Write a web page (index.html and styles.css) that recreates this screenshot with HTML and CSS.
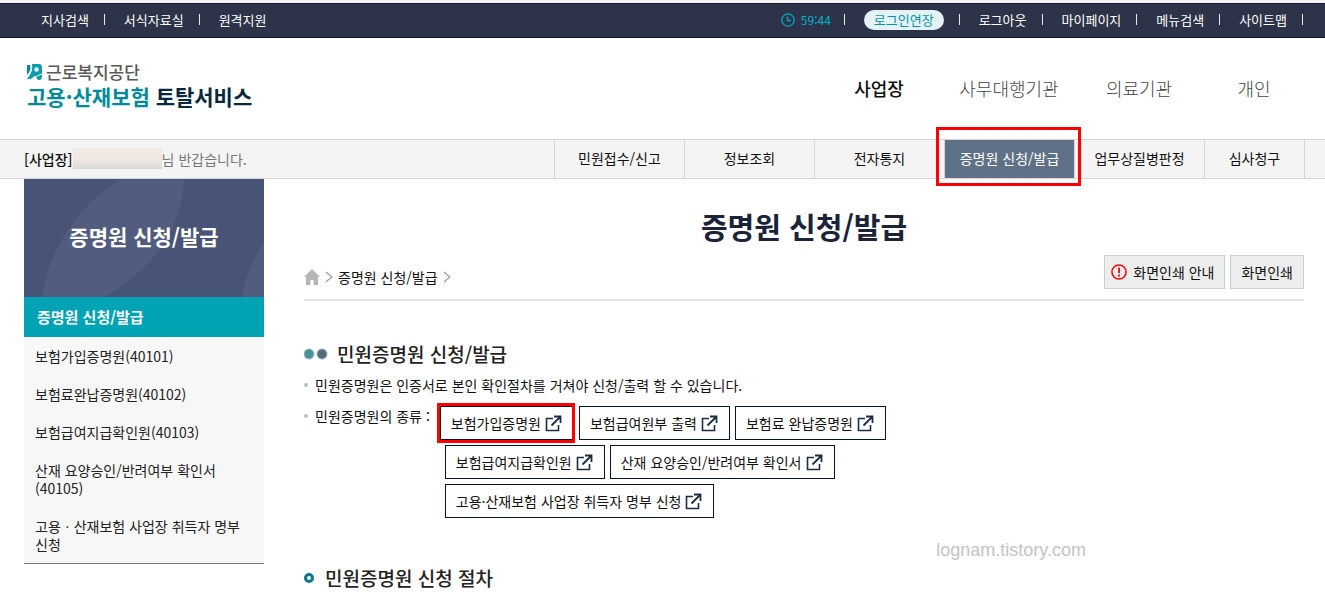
FILE: index.html
```html
<!DOCTYPE html>
<html lang="ko">
<head>
  <meta charset="UTF-8">
  <meta name="viewport" content="width=device-width, initial-scale=1.0">
  <title>고용·산재보험 토탈서비스</title>
  <link rel="stylesheet" href="styles.css">
</head>
<body>
  <svg class="sprite" aria-hidden="true">
    <symbol id="icoLink" viewBox="0 0 17 17">
      <path d="M8 3.500H1.500v12h12V10" fill="none" stroke="#1c2c42" stroke-width="1.6"/>
      <path d="M9 1.500H15.500V8M15.500 1.500L6.500 10.500" fill="none" stroke="#1c2c42" stroke-width="1.8"/>
    </symbol>
    <symbol id="icoArrow" viewBox="0 0 8 12">
      <path d="M1 1l6 5-6 5" fill="none" stroke="#999" stroke-width="1.1"/>
    </symbol>
  </svg>

  <div class="topBar">
    <ul class="utilList">
      <li><a href="#">지사검색</a></li>
      <li><a href="#">서식자료실</a></li>
      <li><a href="#">원격지원</a></li>
    </ul>
    <ul class="utilList utilRight">
      <li class="timer">
        <svg width="14" height="14" viewBox="0 0 14 14"><circle cx="7" cy="7" r="6.2" fill="none" stroke="#00a9bd" stroke-width="1.3"/><path d="M6.500 3.500V7.500H10" fill="none" stroke="#00a9bd" stroke-width="1.3"/></svg>
        <span>59:44</span>
      </li>
      <li><button type="button" class="extendBtn">로그인연장</button></li>
      <li><a href="#">로그아웃</a></li>
      <li><a href="#">마이페이지</a></li>
      <li><a href="#">메뉴검색</a></li>
      <li><a href="#">사이트맵</a></li>
    </ul>
  </div>

  <header class="header">
    <a href="#" class="logo">
      <span class="logoTop">
        <svg width="15" height="16" viewBox="0 0 15 16">
          <path d="M0 1h3c1 3 .5 6-3 10z" fill="#00899d"/>
          <path d="M5 0h7q3 0 3 3v9q0 4-3 4h-1L8 12l-4 3H0C3 11 6 6 5 0z" fill="#0a9db0"/>
          <circle cx="9.500" cy="5.500" r="2.200" fill="#fff"/>
          <path d="M4 0c1.500 6-.5 10-4 13M2 16c4-1 7-4 13-6M7 12l3 4" fill="none" stroke="#fff" stroke-width="1.100"/>
        </svg>
        근로복지공단
      </span>
      <span class="logoMain"><em>고용·산재보험</em> 토탈서비스</span>
    </a>
    <nav class="mainNav">
      <a href="#" class="on">사업장</a>
      <a href="#">사무대행기관</a>
      <a href="#">의료기관</a>
      <a href="#" class="short">개인</a>
    </nav>
  </header>

  <div class="subBar">
    <p class="welcome"><strong>[사업장]</strong><span class="userName"></span>님 반갑습니다.</p>
    <nav class="subNav">
      <a href="#">민원접수/신고</a>
      <a href="#">정보조회</a>
      <a href="#">전자통지</a>
      <a href="#" class="on">증명원 신청/발급</a>
      <a href="#">업무상질병판정</a>
      <a href="#" class="short">심사청구</a>
    </nav>
  </div>

  <div class="wrap">
    <aside class="side">
      <div class="sideHead">
        <svg class="sideBg" viewBox="0 0 240 118" preserveAspectRatio="none" aria-hidden="true">
          <path d="M96 0h64c-1 48-32 92-80 118H18C25 72 52 28 96 0zM240 64v54h-22c3-20 12-40 22-54z" fill="#525c7e"/>
        </svg>
        <h2>증명원 신청/발급</h2>
      </div>
      <a href="#" class="sideCurrent">증명원 신청/발급</a>
      <ul class="sideList">
        <li><a href="#">보험가입증명원(40101)</a></li>
        <li><a href="#">보험료완납증명원(40102)</a></li>
        <li><a href="#">보험급여지급확인원(40103)</a></li>
        <li><a href="#">산재 요양승인/반려여부 확인서(40105)</a></li>
        <li><a href="#">고용ㆍ산재보험 사업장 취득자 명부 신청</a></li>
      </ul>
    </aside>

    <main class="content">
      <h1>증명원 신청/발급</h1>
      <div class="pathBar">
        <nav class="crumbs">
          <a href="#" aria-label="홈"><svg width="16" height="16" viewBox="0 0 16 16"><path d="M8 0l8 8h-2v8H9.500v-5h-3v5H2V8H0z" fill="#b5b5b5"/></svg></a>
          <svg width="8" height="12"><use href="#icoArrow"/></svg>
          <a href="#">증명원 신청/발급</a>
          <svg width="8" height="12"><use href="#icoArrow"/></svg>
        </nav>
        <div class="printBtns">
          <button type="button" class="guideBtn">
            <svg width="16" height="16" viewBox="0 0 16 16"><circle cx="8" cy="8" r="7.100" fill="none" stroke="#f00" stroke-width="1.500"/><path d="M8 3.500v5.500M8 10.500v2" stroke="#f00" stroke-width="1.800"/></svg>
            화면인쇄 안내
          </button>
          <button type="button">화면인쇄</button>
        </div>
      </div>

      <h3 class="titleDots">민원증명원 신청/발급</h3>
      <ul class="dotList">
        <li>민원증명원은 인증서로 본인 확인절차를 거쳐야 신청/출력 할 수 있습니다.</li>
        <li class="kinds">
          <span>민원증명원의 종류 :</span>
          <div class="linkRows">
            <div class="linkRow first">
              <a href="#" class="linkBtn marked">보험가입증명원<svg width="17" height="17"><use href="#icoLink"/></svg></a>
              <a href="#" class="linkBtn">보험급여원부 출력<svg width="17" height="17"><use href="#icoLink"/></svg></a>
              <a href="#" class="linkBtn">보험료 완납증명원<svg width="17" height="17"><use href="#icoLink"/></svg></a>
            </div>
            <div class="linkRow">
              <a href="#" class="linkBtn">보험급여지급확인원<svg width="17" height="17"><use href="#icoLink"/></svg></a>
              <a href="#" class="linkBtn">산재 요양승인/반려여부 확인서<svg width="17" height="17"><use href="#icoLink"/></svg></a>
            </div>
            <div class="linkRow">
              <a href="#" class="linkBtn">고용·산재보험 사업장 취득자 명부 신청<svg width="17" height="17"><use href="#icoLink"/></svg></a>
            </div>
          </div>
        </li>
      </ul>
      <h3 class="titleRing">민원증명원 신청 절차</h3>
      <span class="watermark">lognam.tistory.com</span>
    </main>
  </div>
</body>
</html>
```
FILE: styles.css
```css
*, *::before, *::after { box-sizing: border-box; }
body { margin: 0; border-top: 3px solid #f3f3f3; background: #fff; color: #222; font-family: "Noto Sans CJK KR", sans-serif; font-size: 14px; line-height: 20px; }
a { color: inherit; text-decoration: none; }
ul { margin: 0; padding: 0; list-style: none; }
h1, h2, h3, p { margin: 0; }
button { font-family: inherit; font-size: 14px; cursor: pointer; }
svg { flex: none; display: block; }
.sprite { position: absolute; width: 0; height: 0; }

/* top bar */
.topBar { display: flex; justify-content: space-between; align-items: center; height: 35px; padding: 0 22px 2px 41px; background: #2d3348; border-top: 1px solid #151b33; border-bottom: 1px solid #151b33; color: #fff; font-size: 13px; }
.utilList { display: flex; gap: 19px; }
.utilList li { display: flex; align-items: center; gap: 15px; }
.utilList li::after { content: ""; width: 1px; height: 11px; background: #e8e8e8; }
.utilList:not(.utilRight) li:last-child::after { display: none; }
.utilRight .timer { gap: 6px; color: #00b4cc; font-size: 12px; }
.utilRight .timer::after { margin-left: 7px; }
.extendBtn { height: 20px; padding: 0 10px; border: 0; border-radius: 10px; background: #e4f2f4; color: #0095a5; font-size: 13px; line-height: 18px; }

/* header */
.header { display: flex; justify-content: space-between; height: 101px; padding: 0 21px 2px 27px; }
.logo { display: flex; flex-direction: column; padding-top: 23px; }
.logoTop { display: flex; align-items: center; gap: 4px; height: 22px; color: #58595b; font-size: 17px; font-weight: 500; }
.logoMain { color: #06283c; font-size: 21px; font-weight: 700; line-height: 26px; }
.logoMain em { color: #008a9b; font-style: normal; }
.mainNav { display: flex; align-items: center; font-size: 18px; font-weight: 300; color: #444; }
.mainNav a { width: 130px; text-align: center; }
.mainNav .short { width: 100px; }
.mainNav .on { color: #111; font-weight: 500; }

.subBar { display: flex; justify-content: space-between; height: 40px; padding: 0 20px 0 24px; background: #f4f4f4; border-top: 1px solid #d5d5d5; border-bottom: 1px solid #d5d5d5; }
.welcome { display: flex; align-items: center; padding-bottom: 1px; color: #777; }
.welcome strong { color: #111; font-weight: 500; }
.userName { width: 89px; height: 21px; background: linear-gradient(#f4eae3, #efe7e1 60%, #d8d8d8); }
.subNav { display: flex; color: #111; border-right: 1px solid #d5d5d5; }
.subNav a { position: relative; width: 130px; border-left: 1px solid #d5d5d5; text-align: center; line-height: 37px; }
.subNav .short { width: 100px; }
.subNav .on { background: #5f7186; color: #fff; }
.subNav .on::after { content: ""; position: absolute; inset: -13px -7px -8px -9px; border: 3px solid #f00; z-index: 1; }

.wrap { display: flex; align-items: flex-start; gap: 40px; padding: 0 21px 0 24px; }

/* side menu */
.side { flex: none; width: 240px; }
.sideHead { position: relative; display: flex; justify-content: center; align-items: center; height: 118px; padding-bottom: 4px; background: #485476; color: #fff; }
.sideBg { position: absolute; inset: 0; width: 100%; height: 100%; }
.sideHead h2 { position: relative; font-size: 21px; font-weight: 700; }
.sideCurrent { display: block; padding: 0 13px; background: #00a3b4; color: #fff; font-size: 15px; font-weight: 700; line-height: 40px; }
.sideList { background: #f7f7f7; border-bottom: 1px solid #777; }
.sideList li { padding: 10px 11px; line-height: 18px; }

/* content */
.content { position: relative; flex: 1; min-width: 0; }
.content h1 { padding-top: 27px; color: #1a2338; font-size: 29px; font-weight: 700; line-height: 40px; text-align: center; }
.pathBar { display: flex; justify-content: space-between; align-items: flex-start; margin-top: 9px; padding-bottom: 10px; border-bottom: 2px solid #e3e3e3; }
.crumbs { display: flex; align-items: center; gap: 5px; padding-top: 12px; color: #111; }
.printBtns { display: flex; gap: 5px; }
.printBtns button { display: flex; align-items: center; gap: 6px; height: 34px; padding: 0 10px; border: 1px solid #ccc; background: #eceeed; color: #111; }
.printBtns .guideBtn { padding-left: 6px; }
.content h3 { display: flex; align-items: center; color: #222; font-size: 19px; font-weight: 500; line-height: 28px; }
.titleDots { padding-top: 39px; }
.titleDots::before { content: ""; width: 24px; height: 12px; margin-right: 9px; background: radial-gradient(circle at 5px 6px, #4a8f99 4px, transparent 6px), radial-gradient(circle at 18px 6px, #566a7c 4px, transparent 6px); }
.dotList { padding-top: 7px; color: #111; }
.dotList li { display: flex; align-items: flex-start; line-height: 20px; }
.dotList li::before { content: ""; width: 4px; height: 4px; margin: 8px 7px 0 0; border-radius: 2px; background: #bbb; }
.dotList .kinds { padding-top: 11px; }
.linkRows { display: flex; flex-direction: column; gap: 5px; margin-left: 10px; }
.linkRow { display: flex; gap: 5px; padding-left: 5px; }
.linkRow.first { padding-left: 0; }
.linkBtn { position: relative; display: flex; align-items: center; gap: 4px; height: 34px; padding: 0 11px 0 10px; border: 1px solid #06152e; background: #fff; }
.marked::after { content: ""; position: absolute; inset: -4px -2px -4px -4px; border: 3px solid #f00; }
.titleRing { padding-top: 46px; }
.titleRing::before { content: ""; width: 10px; height: 10px; margin-right: 11px; border: 3px solid #08748f; border-radius: 50%; }
.watermark { position: absolute; right: 218px; top: 361px; color: #c4c4c4; font-family: "Liberation Sans", sans-serif; font-size: 18px; }
```
